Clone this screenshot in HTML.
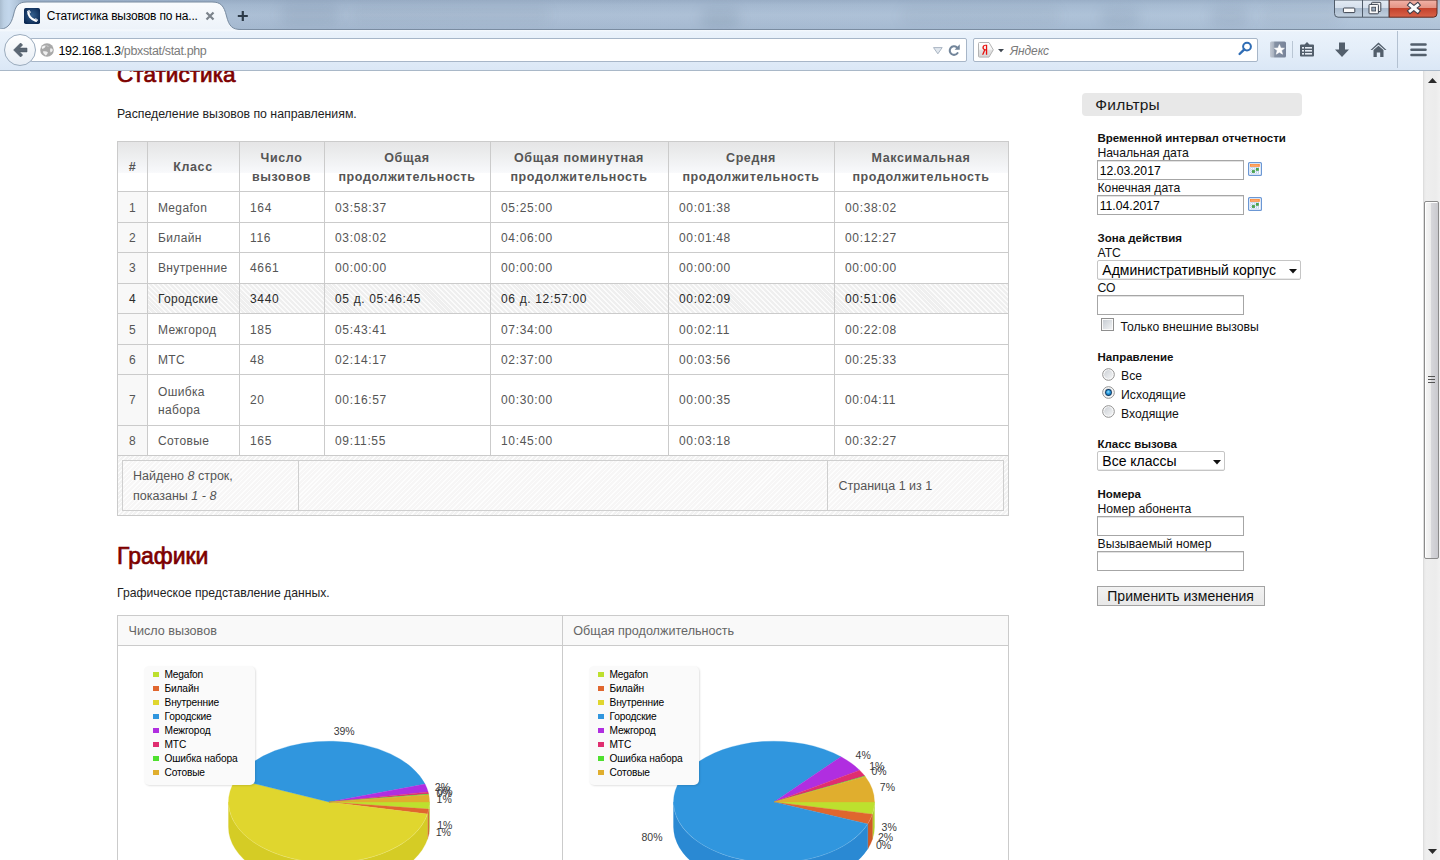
<!DOCTYPE html><html><head><meta charset="utf-8"><style>
html,body{margin:0;padding:0;width:1440px;height:860px;overflow:hidden;background:#fff;font-family:"Liberation Sans",sans-serif;}
.t{position:absolute;white-space:nowrap;}
.r{position:absolute;box-sizing:border-box;}
svg{position:absolute;overflow:visible}
</style></head><body>
<div class="r" style="left:1423px;top:71px;width:17px;height:789px;background:linear-gradient(90deg,#e6e6e6 0px,#eeeeee 2px,#ececec 12px,#f2f2f2 17px);border-left:1px solid #dedede;"></div>
<svg width="9" height="5" style="left:1428px;top:78px" viewBox="0 0 9 5"><path d="M0,5 L4.5,0 L9,5 Z" fill="#2a2a2a"/></svg>
<svg width="9" height="5" style="left:1428px;top:849px" viewBox="0 0 9 5"><path d="M0,0 L9,0 L4.5,5 Z" fill="#2a2a2a"/></svg>
<div class="r" style="left:1424px;top:201px;width:15px;height:358px;border:1px solid #8b8b8b;border-radius:2px;background:linear-gradient(90deg,#f7f7f7 0%,#ececec 45%,#d6d6da 50%,#c9c9ce 100%);box-shadow:inset 1px 1px 0 #fff;"></div>
<svg width="7" height="8" style="left:1428px;top:376px" viewBox="0 0 7 8"><path d="M0,0.5 L7,0.5 M0,3.5 L7,3.5 M0,6.5 L7,6.5" stroke="#555" stroke-width="1"/></svg>
<div class="t" style="left:117px;top:64px;font-size:22.6px;line-height:22.6px;color:#7d0000;-webkit-text-stroke:0.7px #7d0000;">Статистика</div>
<div class="t" style="left:117px;top:108px;font-size:12.3px;line-height:12.3px;color:#1e1e1e;">Распеделение вызовов по направлениям.</div>
<div class="r" style="left:118px;top:142px;width:890px;height:49px;background:linear-gradient(#e5e5e6 0%,#ecedee 25%,#f4f5f7 50%,#f8f9fb 62%,#ffffff 64%,#ffffff 100%);"></div>
<div class="r" style="left:118px;top:192px;width:29px;height:263px;background:#f8f8f8;"></div>
<div class="r" style="left:148px;top:284px;width:860px;height:29px;background:repeating-linear-gradient(45deg,#efefef 0px,#efefef 2.2px,#fbfbfb 2.2px,#fbfbfb 3.5px);"></div>
<div class="r" style="left:117px;top:141px;width:892px;height:1px;background:#cbcbcb;"></div>
<div class="r" style="left:117px;top:191px;width:892px;height:1px;background:#cbcbcb;"></div>
<div class="r" style="left:117px;top:222px;width:892px;height:1px;background:#cbcbcb;"></div>
<div class="r" style="left:117px;top:252px;width:892px;height:1px;background:#cbcbcb;"></div>
<div class="r" style="left:117px;top:283px;width:892px;height:1px;background:#cbcbcb;"></div>
<div class="r" style="left:117px;top:313px;width:892px;height:1px;background:#cbcbcb;"></div>
<div class="r" style="left:117px;top:344px;width:892px;height:1px;background:#cbcbcb;"></div>
<div class="r" style="left:117px;top:374px;width:892px;height:1px;background:#cbcbcb;"></div>
<div class="r" style="left:117px;top:425px;width:892px;height:1px;background:#cbcbcb;"></div>
<div class="r" style="left:117px;top:455px;width:892px;height:1px;background:#cbcbcb;"></div>
<div class="r" style="left:117px;top:141px;width:1px;height:314px;background:#cbcbcb;"></div>
<div class="r" style="left:147px;top:141px;width:1px;height:314px;background:#cbcbcb;"></div>
<div class="r" style="left:239px;top:141px;width:1px;height:314px;background:#cbcbcb;"></div>
<div class="r" style="left:324px;top:141px;width:1px;height:314px;background:#cbcbcb;"></div>
<div class="r" style="left:490px;top:141px;width:1px;height:314px;background:#cbcbcb;"></div>
<div class="r" style="left:668px;top:141px;width:1px;height:314px;background:#cbcbcb;"></div>
<div class="r" style="left:834px;top:141px;width:1px;height:314px;background:#cbcbcb;"></div>
<div class="r" style="left:1008px;top:141px;width:1px;height:314px;background:#cbcbcb;"></div>
<div class="t" style="left:32.5px;width:200px;text-align:center;top:161px;font-size:12.5px;line-height:12.5px;color:#555555;font-weight:bold;letter-spacing:0.6px;">#</div>
<div class="t" style="left:93.0px;width:200px;text-align:center;top:161px;font-size:12.5px;line-height:12.5px;color:#555555;font-weight:bold;letter-spacing:0.6px;">Класс</div>
<div class="t" style="left:181.5px;width:200px;text-align:center;top:152px;font-size:12.5px;line-height:12.5px;color:#555555;font-weight:bold;letter-spacing:0.6px;">Число</div>
<div class="t" style="left:181.5px;width:200px;text-align:center;top:171px;font-size:12.5px;line-height:12.5px;color:#555555;font-weight:bold;letter-spacing:0.6px;">вызовов</div>
<div class="t" style="left:307.0px;width:200px;text-align:center;top:152px;font-size:12.5px;line-height:12.5px;color:#555555;font-weight:bold;letter-spacing:0.6px;">Общая</div>
<div class="t" style="left:307.0px;width:200px;text-align:center;top:171px;font-size:12.5px;line-height:12.5px;color:#555555;font-weight:bold;letter-spacing:0.6px;">продолжительность</div>
<div class="t" style="left:479.0px;width:200px;text-align:center;top:152px;font-size:12.5px;line-height:12.5px;color:#555555;font-weight:bold;letter-spacing:0.6px;">Общая поминутная</div>
<div class="t" style="left:479.0px;width:200px;text-align:center;top:171px;font-size:12.5px;line-height:12.5px;color:#555555;font-weight:bold;letter-spacing:0.6px;">продолжительность</div>
<div class="t" style="left:651.0px;width:200px;text-align:center;top:152px;font-size:12.5px;line-height:12.5px;color:#555555;font-weight:bold;letter-spacing:0.6px;">Средня</div>
<div class="t" style="left:651.0px;width:200px;text-align:center;top:171px;font-size:12.5px;line-height:12.5px;color:#555555;font-weight:bold;letter-spacing:0.6px;">продолжительность</div>
<div class="t" style="left:821.0px;width:200px;text-align:center;top:152px;font-size:12.5px;line-height:12.5px;color:#555555;font-weight:bold;letter-spacing:0.6px;">Максимальная</div>
<div class="t" style="left:821.0px;width:200px;text-align:center;top:171px;font-size:12.5px;line-height:12.5px;color:#555555;font-weight:bold;letter-spacing:0.6px;">продолжительность</div>
<div class="t" style="left:122.5px;width:20px;text-align:center;top:202px;font-size:12px;line-height:12px;color:#555555;letter-spacing:0.3px;">1</div>
<div class="t" style="left:158px;top:202px;font-size:12px;line-height:12px;color:#555555;letter-spacing:0.35px;">Megafon</div>
<div class="t" style="left:250px;top:202px;font-size:12px;line-height:12px;color:#555555;letter-spacing:0.65px;">164</div>
<div class="t" style="left:335px;top:202px;font-size:12px;line-height:12px;color:#555555;letter-spacing:0.65px;">03:58:37</div>
<div class="t" style="left:501px;top:202px;font-size:12px;line-height:12px;color:#555555;letter-spacing:0.65px;">05:25:00</div>
<div class="t" style="left:679px;top:202px;font-size:12px;line-height:12px;color:#555555;letter-spacing:0.65px;">00:01:38</div>
<div class="t" style="left:845px;top:202px;font-size:12px;line-height:12px;color:#555555;letter-spacing:0.65px;">00:38:02</div>
<div class="t" style="left:122.5px;width:20px;text-align:center;top:232px;font-size:12px;line-height:12px;color:#555555;letter-spacing:0.3px;">2</div>
<div class="t" style="left:158px;top:232px;font-size:12px;line-height:12px;color:#555555;letter-spacing:0.35px;">Билайн</div>
<div class="t" style="left:250px;top:232px;font-size:12px;line-height:12px;color:#555555;letter-spacing:0.65px;">116</div>
<div class="t" style="left:335px;top:232px;font-size:12px;line-height:12px;color:#555555;letter-spacing:0.65px;">03:08:02</div>
<div class="t" style="left:501px;top:232px;font-size:12px;line-height:12px;color:#555555;letter-spacing:0.65px;">04:06:00</div>
<div class="t" style="left:679px;top:232px;font-size:12px;line-height:12px;color:#555555;letter-spacing:0.65px;">00:01:48</div>
<div class="t" style="left:845px;top:232px;font-size:12px;line-height:12px;color:#555555;letter-spacing:0.65px;">00:12:27</div>
<div class="t" style="left:122.5px;width:20px;text-align:center;top:262px;font-size:12px;line-height:12px;color:#555555;letter-spacing:0.3px;">3</div>
<div class="t" style="left:158px;top:262px;font-size:12px;line-height:12px;color:#555555;letter-spacing:0.35px;">Внутренние</div>
<div class="t" style="left:250px;top:262px;font-size:12px;line-height:12px;color:#555555;letter-spacing:0.65px;">4661</div>
<div class="t" style="left:335px;top:262px;font-size:12px;line-height:12px;color:#555555;letter-spacing:0.65px;">00:00:00</div>
<div class="t" style="left:501px;top:262px;font-size:12px;line-height:12px;color:#555555;letter-spacing:0.65px;">00:00:00</div>
<div class="t" style="left:679px;top:262px;font-size:12px;line-height:12px;color:#555555;letter-spacing:0.65px;">00:00:00</div>
<div class="t" style="left:845px;top:262px;font-size:12px;line-height:12px;color:#555555;letter-spacing:0.65px;">00:00:00</div>
<div class="t" style="left:122.5px;width:20px;text-align:center;top:293px;font-size:12px;line-height:12px;color:#2b2b2b;letter-spacing:0.3px;">4</div>
<div class="t" style="left:158px;top:293px;font-size:12px;line-height:12px;color:#2b2b2b;letter-spacing:0.35px;">Городские</div>
<div class="t" style="left:250px;top:293px;font-size:12px;line-height:12px;color:#2b2b2b;letter-spacing:0.65px;">3440</div>
<div class="t" style="left:335px;top:293px;font-size:12px;line-height:12px;color:#2b2b2b;letter-spacing:0.65px;">05 д. 05:46:45</div>
<div class="t" style="left:501px;top:293px;font-size:12px;line-height:12px;color:#2b2b2b;letter-spacing:0.65px;">06 д. 12:57:00</div>
<div class="t" style="left:679px;top:293px;font-size:12px;line-height:12px;color:#2b2b2b;letter-spacing:0.65px;">00:02:09</div>
<div class="t" style="left:845px;top:293px;font-size:12px;line-height:12px;color:#2b2b2b;letter-spacing:0.65px;">00:51:06</div>
<div class="t" style="left:122.5px;width:20px;text-align:center;top:324px;font-size:12px;line-height:12px;color:#555555;letter-spacing:0.3px;">5</div>
<div class="t" style="left:158px;top:324px;font-size:12px;line-height:12px;color:#555555;letter-spacing:0.35px;">Межгород</div>
<div class="t" style="left:250px;top:324px;font-size:12px;line-height:12px;color:#555555;letter-spacing:0.65px;">185</div>
<div class="t" style="left:335px;top:324px;font-size:12px;line-height:12px;color:#555555;letter-spacing:0.65px;">05:43:41</div>
<div class="t" style="left:501px;top:324px;font-size:12px;line-height:12px;color:#555555;letter-spacing:0.65px;">07:34:00</div>
<div class="t" style="left:679px;top:324px;font-size:12px;line-height:12px;color:#555555;letter-spacing:0.65px;">00:02:11</div>
<div class="t" style="left:845px;top:324px;font-size:12px;line-height:12px;color:#555555;letter-spacing:0.65px;">00:22:08</div>
<div class="t" style="left:122.5px;width:20px;text-align:center;top:354px;font-size:12px;line-height:12px;color:#555555;letter-spacing:0.3px;">6</div>
<div class="t" style="left:158px;top:354px;font-size:12px;line-height:12px;color:#555555;letter-spacing:0.35px;">МТС</div>
<div class="t" style="left:250px;top:354px;font-size:12px;line-height:12px;color:#555555;letter-spacing:0.65px;">48</div>
<div class="t" style="left:335px;top:354px;font-size:12px;line-height:12px;color:#555555;letter-spacing:0.65px;">02:14:17</div>
<div class="t" style="left:501px;top:354px;font-size:12px;line-height:12px;color:#555555;letter-spacing:0.65px;">02:37:00</div>
<div class="t" style="left:679px;top:354px;font-size:12px;line-height:12px;color:#555555;letter-spacing:0.65px;">00:03:56</div>
<div class="t" style="left:845px;top:354px;font-size:12px;line-height:12px;color:#555555;letter-spacing:0.65px;">00:25:33</div>
<div class="t" style="left:122.5px;width:20px;text-align:center;top:394px;font-size:12px;line-height:12px;color:#555555;letter-spacing:0.3px;">7</div>
<div class="t" style="left:158px;top:385.5px;font-size:12px;line-height:12px;color:#555555;letter-spacing:0.35px;">Ошибка</div>
<div class="t" style="left:158px;top:404px;font-size:12px;line-height:12px;color:#555555;letter-spacing:0.35px;">набора</div>
<div class="t" style="left:250px;top:394px;font-size:12px;line-height:12px;color:#555555;letter-spacing:0.65px;">20</div>
<div class="t" style="left:335px;top:394px;font-size:12px;line-height:12px;color:#555555;letter-spacing:0.65px;">00:16:57</div>
<div class="t" style="left:501px;top:394px;font-size:12px;line-height:12px;color:#555555;letter-spacing:0.65px;">00:30:00</div>
<div class="t" style="left:679px;top:394px;font-size:12px;line-height:12px;color:#555555;letter-spacing:0.65px;">00:00:35</div>
<div class="t" style="left:845px;top:394px;font-size:12px;line-height:12px;color:#555555;letter-spacing:0.65px;">00:04:11</div>
<div class="t" style="left:122.5px;width:20px;text-align:center;top:435px;font-size:12px;line-height:12px;color:#555555;letter-spacing:0.3px;">8</div>
<div class="t" style="left:158px;top:435px;font-size:12px;line-height:12px;color:#555555;letter-spacing:0.35px;">Сотовые</div>
<div class="t" style="left:250px;top:435px;font-size:12px;line-height:12px;color:#555555;letter-spacing:0.65px;">165</div>
<div class="t" style="left:335px;top:435px;font-size:12px;line-height:12px;color:#555555;letter-spacing:0.65px;">09:11:55</div>
<div class="t" style="left:501px;top:435px;font-size:12px;line-height:12px;color:#555555;letter-spacing:0.65px;">10:45:00</div>
<div class="t" style="left:679px;top:435px;font-size:12px;line-height:12px;color:#555555;letter-spacing:0.65px;">00:03:18</div>
<div class="t" style="left:845px;top:435px;font-size:12px;line-height:12px;color:#555555;letter-spacing:0.65px;">00:32:27</div>
<div class="r" style="left:118px;top:456px;width:890px;height:59px;background:repeating-linear-gradient(-45deg,#f2f2f2 0px,#f2f2f2 2.1px,#fcfcfc 2.1px,#fcfcfc 3.2px);"></div>
<div class="r" style="left:117px;top:515px;width:892px;height:1px;background:#cbcbcb;"></div>
<div class="r" style="left:117px;top:456px;width:1px;height:60px;background:#cbcbcb;"></div>
<div class="r" style="left:1008px;top:456px;width:1px;height:60px;background:#cbcbcb;"></div>
<div class="r" style="left:122px;top:460px;width:882px;height:51px;border:1px solid #cfcfcf;background:repeating-linear-gradient(-45deg,#f7f6f6 0px,#f7f6f6 2.1px,#fdfdfd 2.1px,#fdfdfd 3.2px);"></div>
<div class="r" style="left:298px;top:461px;width:1px;height:49px;background:#cfcfcf;"></div>
<div class="r" style="left:827px;top:461px;width:1px;height:49px;background:#cfcfcf;"></div>
<div class="t" style="left:133px;top:470px;font-size:12.5px;line-height:12.5px;color:#555555;">Найдено <i>8</i> строк,</div>
<div class="t" style="left:133px;top:490px;font-size:12.5px;line-height:12.5px;color:#555555;">показаны <i>1 - 8</i></div>
<div class="t" style="left:838.5px;top:480px;font-size:12.5px;line-height:12.5px;color:#555555;">Страница 1 из 1</div>
<div class="t" style="left:117px;top:545px;font-size:23px;line-height:23px;color:#7d0000;-webkit-text-stroke:0.7px #7d0000;">Графики</div>
<div class="t" style="left:117px;top:587px;font-size:12.2px;line-height:12.2px;color:#1e1e1e;">Графическое представление данных.</div>
<div class="r" style="left:117px;top:615px;width:892px;height:260px;border:1px solid #cbcbcb;"></div>
<div class="r" style="left:118px;top:616px;width:890px;height:29px;background:#f9f9f9;"></div>
<div class="r" style="left:118px;top:645px;width:890px;height:1px;background:#cbcbcb;"></div>
<div class="r" style="left:562px;top:616px;width:1px;height:260px;background:#cbcbcb;"></div>
<div class="t" style="left:128.5px;top:625px;font-size:12.6px;line-height:12.6px;color:#666666;">Число вызовов</div>
<div class="t" style="left:573.3px;top:625px;font-size:12.6px;line-height:12.6px;color:#666666;">Общая продолжительность</div>
<svg width="240" height="200" style="left:208.60000000000002px;top:721.6px">
<path d="M220.50,80.00 A100.5,60.8 0 0 1 219.81,87.10 L219.81,112.10 A100.5,60.8 0 0 0 220.50,105.00 Z" fill="#afd12a" stroke="#afd12a" stroke-width="0.3"/>
<path d="M219.81,87.10 A100.5,60.8 0 0 1 218.50,92.08 L218.50,117.08 A100.5,60.8 0 0 0 219.81,112.10 Z" fill="#cf5a27" stroke="#cf5a27" stroke-width="0.3"/>
<path d="M218.50,92.08 A100.5,60.8 0 0 1 19.50,80.00 L19.50,105.00 A100.5,60.8 0 0 0 218.50,117.08 Z" fill="#d5cc25" stroke="#d5cc25" stroke-width="0.3"/>
<path d="M120.00,80.00 L220.50,80.00 A100.5,60.8 0 0 1 219.81,87.10 Z" fill="#bde02e" stroke="#bde02e" stroke-width="0.3"/>
<path d="M120.00,80.00 L219.81,87.10 A100.5,60.8 0 0 1 218.50,92.08 Z" fill="#e0662e" stroke="#e0662e" stroke-width="0.3"/>
<path d="M120.00,80.00 L218.50,92.08 A100.5,60.8 0 1 1 26.92,57.07 Z" fill="#e0d62e" stroke="#e0d62e" stroke-width="0.3"/>
<path d="M120.00,80.00 L26.92,57.07 A100.5,60.8 0 0 1 216.06,62.12 Z" fill="#3096de" stroke="#3096de" stroke-width="0.3"/>
<path d="M120.00,80.00 L216.06,62.12 A100.5,60.8 0 0 1 219.11,69.93 Z" fill="#b02ee0" stroke="#b02ee0" stroke-width="0.3"/>
<path d="M120.00,80.00 L219.11,69.93 A100.5,60.8 0 0 1 219.62,71.99 Z" fill="#e02e70" stroke="#e02e70" stroke-width="0.3"/>
<path d="M120.00,80.00 L219.62,71.99 A100.5,60.8 0 0 1 219.80,72.85 Z" fill="#4ee02e" stroke="#4ee02e" stroke-width="0.3"/>
<path d="M120.00,80.00 L219.80,72.85 A100.5,60.8 0 0 1 220.50,80.00 Z" fill="#e0ae2e" stroke="#e0ae2e" stroke-width="0.3"/>
<path d="M220.36,83.18 A100.5,60.8 0 0 1 19.64,83.18" fill="none" stroke="#ffffff" stroke-opacity="0.15" stroke-width="1"/>
</svg>
<svg width="240" height="200" style="left:653.6px;top:721.6px">
<path d="M220.50,80.00 A100.5,60.8 0 0 1 218.45,92.23 L218.45,117.23 A100.5,60.8 0 0 0 220.50,105.00 Z" fill="#afd12a" stroke="#afd12a" stroke-width="0.3"/>
<path d="M218.45,92.23 A100.5,60.8 0 0 1 213.76,101.89 L213.76,126.89 A100.5,60.8 0 0 0 218.45,117.23 Z" fill="#cf5a27" stroke="#cf5a27" stroke-width="0.3"/>
<path d="M213.76,101.89 A100.5,60.8 0 0 1 19.50,80.00 L19.50,105.00 A100.5,60.8 0 0 0 213.76,126.89 Z" fill="#2a89d3" stroke="#2a89d3" stroke-width="0.3"/>
<path d="M120.00,80.00 L220.50,80.00 A100.5,60.8 0 0 1 218.45,92.23 Z" fill="#bde02e" stroke="#bde02e" stroke-width="0.3"/>
<path d="M120.00,80.00 L218.45,92.23 A100.5,60.8 0 0 1 213.76,101.89 Z" fill="#e0662e" stroke="#e0662e" stroke-width="0.3"/>
<path d="M120.00,80.00 L213.76,101.89 A100.5,60.8 0 1 1 186.99,34.68 Z" fill="#3096de" stroke="#3096de" stroke-width="0.3"/>
<path d="M120.00,80.00 L186.99,34.68 A100.5,60.8 0 0 1 205.60,48.14 Z" fill="#b02ee0" stroke="#b02ee0" stroke-width="0.3"/>
<path d="M120.00,80.00 L205.60,48.14 A100.5,60.8 0 0 1 210.86,54.02 Z" fill="#e02e70" stroke="#e02e70" stroke-width="0.3"/>
<path d="M120.00,80.00 L210.86,54.02 A100.5,60.8 0 0 1 211.23,54.50 Z" fill="#4ee02e" stroke="#4ee02e" stroke-width="0.3"/>
<path d="M120.00,80.00 L211.23,54.50 A100.5,60.8 0 0 1 220.50,80.00 Z" fill="#e0ae2e" stroke="#e0ae2e" stroke-width="0.3"/>
<path d="M220.36,83.18 A100.5,60.8 0 0 1 19.64,83.18" fill="none" stroke="#ffffff" stroke-opacity="0.15" stroke-width="1"/>
</svg>
<div class="t" style="left:333.7px;top:725.5px;font-size:10.5px;line-height:10.5px;color:#3a3a3a;">39%</div>
<div class="t" style="left:434.8px;top:781.5px;font-size:10.5px;line-height:10.5px;color:#3a3a3a;">2%</div>
<div class="t" style="left:436.6px;top:788px;font-size:10.5px;line-height:10.5px;color:#3a3a3a;">0%</div>
<div class="t" style="left:437.5px;top:786px;font-size:10.5px;line-height:10.5px;color:#3a3a3a;">0%</div>
<div class="t" style="left:436.6px;top:794px;font-size:10.5px;line-height:10.5px;color:#3a3a3a;">1%</div>
<div class="t" style="left:437.2px;top:820px;font-size:10.5px;line-height:10.5px;color:#3a3a3a;">1%</div>
<div class="t" style="left:435.7px;top:826.5px;font-size:10.5px;line-height:10.5px;color:#3a3a3a;">1%</div>
<div class="t" style="left:855.6px;top:749.7px;font-size:10.5px;line-height:10.5px;color:#3a3a3a;">4%</div>
<div class="t" style="left:869.2px;top:761px;font-size:10.5px;line-height:10.5px;color:#3a3a3a;">1%</div>
<div class="t" style="left:871.5px;top:765.6px;font-size:10.5px;line-height:10.5px;color:#3a3a3a;">0%</div>
<div class="t" style="left:879.8px;top:781.5px;font-size:10.5px;line-height:10.5px;color:#3a3a3a;">7%</div>
<div class="t" style="left:881.6px;top:821.5px;font-size:10.5px;line-height:10.5px;color:#3a3a3a;">3%</div>
<div class="t" style="left:878px;top:832px;font-size:10.5px;line-height:10.5px;color:#3a3a3a;">2%</div>
<div class="t" style="left:876px;top:839.7px;font-size:10.5px;line-height:10.5px;color:#3a3a3a;">0%</div>
<div class="t" style="left:641.5px;top:832px;font-size:10.5px;line-height:10.5px;color:#3a3a3a;">80%</div>
<div class="r" style="left:144px;top:666px;width:111px;height:119px;background:#fafafa;border-radius:5px;box-shadow:1px 1px 2px rgba(0,0,0,0.12);"></div>
<div class="r" style="left:153px;top:671.75px;width:5.5px;height:5.5px;background:#bde02e;"></div>
<div class="t" style="left:164.5px;top:670px;font-size:10.2px;line-height:10.2px;color:#000;letter-spacing:-0.15px;">Megafon</div>
<div class="r" style="left:153px;top:685.75px;width:5.5px;height:5.5px;background:#e0662e;"></div>
<div class="t" style="left:164.5px;top:684px;font-size:10.2px;line-height:10.2px;color:#000;letter-spacing:-0.15px;">Билайн</div>
<div class="r" style="left:153px;top:699.75px;width:5.5px;height:5.5px;background:#e0d62e;"></div>
<div class="t" style="left:164.5px;top:698px;font-size:10.2px;line-height:10.2px;color:#000;letter-spacing:-0.15px;">Внутренние</div>
<div class="r" style="left:153px;top:713.75px;width:5.5px;height:5.5px;background:#3096de;"></div>
<div class="t" style="left:164.5px;top:712px;font-size:10.2px;line-height:10.2px;color:#000;letter-spacing:-0.15px;">Городские</div>
<div class="r" style="left:153px;top:727.75px;width:5.5px;height:5.5px;background:#b02ee0;"></div>
<div class="t" style="left:164.5px;top:726px;font-size:10.2px;line-height:10.2px;color:#000;letter-spacing:-0.15px;">Межгород</div>
<div class="r" style="left:153px;top:741.75px;width:5.5px;height:5.5px;background:#e02e70;"></div>
<div class="t" style="left:164.5px;top:740px;font-size:10.2px;line-height:10.2px;color:#000;letter-spacing:-0.15px;">МТС</div>
<div class="r" style="left:153px;top:755.75px;width:5.5px;height:5.5px;background:#4ee02e;"></div>
<div class="t" style="left:164.5px;top:754px;font-size:10.2px;line-height:10.2px;color:#000;letter-spacing:-0.15px;">Ошибка набора</div>
<div class="r" style="left:153px;top:769.75px;width:5.5px;height:5.5px;background:#e0ae2e;"></div>
<div class="t" style="left:164.5px;top:768px;font-size:10.2px;line-height:10.2px;color:#000;letter-spacing:-0.15px;">Сотовые</div>
<div class="r" style="left:589px;top:666px;width:110px;height:119px;background:#fafafa;border-radius:5px;box-shadow:1px 1px 2px rgba(0,0,0,0.12);"></div>
<div class="r" style="left:598px;top:671.75px;width:5.5px;height:5.5px;background:#bde02e;"></div>
<div class="t" style="left:609.5px;top:670px;font-size:10.2px;line-height:10.2px;color:#000;letter-spacing:-0.15px;">Megafon</div>
<div class="r" style="left:598px;top:685.75px;width:5.5px;height:5.5px;background:#e0662e;"></div>
<div class="t" style="left:609.5px;top:684px;font-size:10.2px;line-height:10.2px;color:#000;letter-spacing:-0.15px;">Билайн</div>
<div class="r" style="left:598px;top:699.75px;width:5.5px;height:5.5px;background:#e0d62e;"></div>
<div class="t" style="left:609.5px;top:698px;font-size:10.2px;line-height:10.2px;color:#000;letter-spacing:-0.15px;">Внутренние</div>
<div class="r" style="left:598px;top:713.75px;width:5.5px;height:5.5px;background:#3096de;"></div>
<div class="t" style="left:609.5px;top:712px;font-size:10.2px;line-height:10.2px;color:#000;letter-spacing:-0.15px;">Городские</div>
<div class="r" style="left:598px;top:727.75px;width:5.5px;height:5.5px;background:#b02ee0;"></div>
<div class="t" style="left:609.5px;top:726px;font-size:10.2px;line-height:10.2px;color:#000;letter-spacing:-0.15px;">Межгород</div>
<div class="r" style="left:598px;top:741.75px;width:5.5px;height:5.5px;background:#e02e70;"></div>
<div class="t" style="left:609.5px;top:740px;font-size:10.2px;line-height:10.2px;color:#000;letter-spacing:-0.15px;">МТС</div>
<div class="r" style="left:598px;top:755.75px;width:5.5px;height:5.5px;background:#4ee02e;"></div>
<div class="t" style="left:609.5px;top:754px;font-size:10.2px;line-height:10.2px;color:#000;letter-spacing:-0.15px;">Ошибка набора</div>
<div class="r" style="left:598px;top:769.75px;width:5.5px;height:5.5px;background:#e0ae2e;"></div>
<div class="t" style="left:609.5px;top:768px;font-size:10.2px;line-height:10.2px;color:#000;letter-spacing:-0.15px;">Сотовые</div>
<div class="r" style="left:1082px;top:93px;width:220px;height:23px;background:#e8e8e8;border-radius:4px;"></div>
<div class="t" style="left:1095.3px;top:97px;font-size:15.5px;line-height:15.5px;color:#1a1a1a;letter-spacing:0.2px;">Фильтры</div>
<div class="t" style="left:1097.5px;top:133px;font-size:11.5px;line-height:11.5px;color:#111111;font-weight:bold;">Временной интервал отчетности</div>
<div class="t" style="left:1097.5px;top:147px;font-size:12.2px;line-height:12.2px;color:#111111;">Начальная дата</div>
<div class="r" style="left:1097px;top:160px;width:147px;height:20px;background:#fff;border:1px solid #a6a6a6;box-shadow:inset 0 1px 0 #e2e2e2;"></div>
<div class="t" style="left:1099.7px;top:165px;font-size:12.2px;line-height:12.2px;color:#000;">12.03.2017</div>
<div class="t" style="left:1097.5px;top:182px;font-size:12.2px;line-height:12.2px;color:#111111;">Конечная дата</div>
<div class="r" style="left:1097px;top:195px;width:147px;height:20px;background:#fff;border:1px solid #a6a6a6;box-shadow:inset 0 1px 0 #e2e2e2;"></div>
<div class="t" style="left:1099.7px;top:200px;font-size:12.2px;line-height:12.2px;color:#000;">11.04.2017</div>
<svg width="14" height="14" style="left:1248px;top:162px" viewBox="0 0 14 14">
<rect x="0.6" y="0.6" width="12.8" height="12.8" rx="1" fill="#fbfdff" stroke="#6b97d4" stroke-width="1.2"/>
<rect x="2" y="2" width="9.8" height="2.8" fill="#fb8a3c"/>
<rect x="2.8" y="2.7" width="7.8" height="1" fill="#fdb27a"/>
<path d="M2,6.1 L12,6.1 M2,8.2 L12,8.2 M2,10.3 L12,10.3 M3.8,5 L3.8,12 M5.9,5 L5.9,12 M8,5 L8,12 M10.1,5 L10.1,12" stroke="#a3bfe6" stroke-width="0.9" stroke-dasharray="1,1"/>
<rect x="7.9" y="6" width="2.9" height="2.8" fill="#4aa24e"/><rect x="3.9" y="8.1" width="3" height="2.8" fill="#4aa24e"/>
</svg>
<svg width="14" height="14" style="left:1248px;top:197px" viewBox="0 0 14 14">
<rect x="0.6" y="0.6" width="12.8" height="12.8" rx="1" fill="#fbfdff" stroke="#6b97d4" stroke-width="1.2"/>
<rect x="2" y="2" width="9.8" height="2.8" fill="#fb8a3c"/>
<rect x="2.8" y="2.7" width="7.8" height="1" fill="#fdb27a"/>
<path d="M2,6.1 L12,6.1 M2,8.2 L12,8.2 M2,10.3 L12,10.3 M3.8,5 L3.8,12 M5.9,5 L5.9,12 M8,5 L8,12 M10.1,5 L10.1,12" stroke="#a3bfe6" stroke-width="0.9" stroke-dasharray="1,1"/>
<rect x="7.9" y="6" width="2.9" height="2.8" fill="#4aa24e"/><rect x="3.9" y="8.1" width="3" height="2.8" fill="#4aa24e"/>
</svg>
<div class="t" style="left:1097.5px;top:233px;font-size:11.5px;line-height:11.5px;color:#111111;font-weight:bold;">Зона действия</div>
<div class="t" style="left:1097.5px;top:246.5px;font-size:12.2px;line-height:12.2px;color:#111111;">АТС</div>
<div class="r" style="left:1097px;top:260px;width:204px;height:20px;background:#fff;border:1px solid #c5c5c5;border-radius:2px;box-shadow:inset 0 -1px 0 #eaeaea;"></div>
<div class="t" style="left:1102.3px;top:263px;font-size:14px;line-height:14px;color:#000;">Административный корпус</div>
<svg width="8" height="5" style="left:1288.5px;top:268.5px" viewBox="0 0 8 5"><path d="M0,0 L8,0 L4,4.5 Z" fill="#111"/></svg>
<div class="t" style="left:1097.5px;top:282px;font-size:12.2px;line-height:12.2px;color:#111111;">СО</div>
<div class="r" style="left:1097px;top:295px;width:147px;height:20px;background:#fff;border:1px solid #a6a6a6;box-shadow:inset 0 1px 0 #e2e2e2;"></div>
<div class="r" style="left:1101px;top:318px;width:13px;height:13px;border:1px solid #8f8f8f;background:linear-gradient(135deg,#c3c9d0,#f5f6f7);box-shadow:inset 0 0 0 1px #fafafa;"></div>
<div class="t" style="left:1120.5px;top:320.5px;font-size:12.2px;line-height:12.2px;color:#111111;">Только внешние вызовы</div>
<div class="t" style="left:1097.5px;top:352px;font-size:11.5px;line-height:11.5px;color:#111111;font-weight:bold;">Направление</div>
<svg width="13" height="13" style="left:1101.9px;top:367.5px" viewBox="0 0 13 13">
<defs><linearGradient id="rdg" x1="0" y1="0" x2="1" y2="1"><stop offset="0" stop-color="#cdd1d6"/><stop offset="1" stop-color="#f4f5f6"/></linearGradient>
<radialGradient id="rdo" cx="0.45" cy="0.35" r="0.7"><stop offset="0" stop-color="#9be0ff"/><stop offset="0.5" stop-color="#2a9ee0"/><stop offset="1" stop-color="#1369a8"/></radialGradient></defs>
<circle cx="6.5" cy="6.5" r="5.8" fill="#fff" stroke="#8d8d8d" stroke-width="1"/>
<circle cx="6.5" cy="6.5" r="4.4" fill="url(#rdg)"/></svg>
<svg width="13" height="13" style="left:1101.9px;top:386.4px" viewBox="0 0 13 13">
<defs><linearGradient id="rdg" x1="0" y1="0" x2="1" y2="1"><stop offset="0" stop-color="#cdd1d6"/><stop offset="1" stop-color="#f4f5f6"/></linearGradient>
<radialGradient id="rdo" cx="0.45" cy="0.35" r="0.7"><stop offset="0" stop-color="#9be0ff"/><stop offset="0.5" stop-color="#2a9ee0"/><stop offset="1" stop-color="#1369a8"/></radialGradient></defs>
<circle cx="6.5" cy="6.5" r="5.8" fill="#fff" stroke="#8d8d8d" stroke-width="1"/>
<circle cx="6.5" cy="6.5" r="4.4" fill="url(#rdg)"/><circle cx="6.5" cy="6.5" r="3.4" fill="#0f3a63"/><circle cx="6.5" cy="6.6" r="2.5" fill="url(#rdo)"/></svg>
<svg width="13" height="13" style="left:1101.9px;top:405.4px" viewBox="0 0 13 13">
<defs><linearGradient id="rdg" x1="0" y1="0" x2="1" y2="1"><stop offset="0" stop-color="#cdd1d6"/><stop offset="1" stop-color="#f4f5f6"/></linearGradient>
<radialGradient id="rdo" cx="0.45" cy="0.35" r="0.7"><stop offset="0" stop-color="#9be0ff"/><stop offset="0.5" stop-color="#2a9ee0"/><stop offset="1" stop-color="#1369a8"/></radialGradient></defs>
<circle cx="6.5" cy="6.5" r="5.8" fill="#fff" stroke="#8d8d8d" stroke-width="1"/>
<circle cx="6.5" cy="6.5" r="4.4" fill="url(#rdg)"/></svg>
<div class="t" style="left:1121.1px;top:370px;font-size:12.2px;line-height:12.2px;color:#111111;">Все</div>
<div class="t" style="left:1121.1px;top:388.6px;font-size:12.2px;line-height:12.2px;color:#111111;">Исходящие</div>
<div class="t" style="left:1121.1px;top:408px;font-size:12.2px;line-height:12.2px;color:#111111;">Входящие</div>
<div class="t" style="left:1097.5px;top:438.5px;font-size:11.5px;line-height:11.5px;color:#111111;font-weight:bold;">Класс вызова</div>
<div class="r" style="left:1097px;top:451px;width:128px;height:20px;background:#fff;border:1px solid #c5c5c5;border-radius:2px;box-shadow:inset 0 -1px 0 #eaeaea;"></div>
<div class="t" style="left:1102.3px;top:454px;font-size:14px;line-height:14px;color:#000;">Все классы</div>
<svg width="8" height="5" style="left:1213px;top:459.5px" viewBox="0 0 8 5"><path d="M0,0 L8,0 L4,4.5 Z" fill="#111"/></svg>
<div class="t" style="left:1097.5px;top:488.6px;font-size:11.5px;line-height:11.5px;color:#111111;font-weight:bold;">Номера</div>
<div class="t" style="left:1097.5px;top:502.5px;font-size:12.2px;line-height:12.2px;color:#111111;">Номер абонента</div>
<div class="r" style="left:1097px;top:516px;width:147px;height:20px;background:#fff;border:1px solid #a6a6a6;box-shadow:inset 0 1px 0 #e2e2e2;"></div>
<div class="t" style="left:1097.5px;top:537.5px;font-size:12.2px;line-height:12.2px;color:#111111;">Вызываемый номер</div>
<div class="r" style="left:1097px;top:551px;width:147px;height:20px;background:#fff;border:1px solid #a6a6a6;box-shadow:inset 0 1px 0 #e2e2e2;"></div>
<div class="r" style="left:1097px;top:586px;width:168px;height:20px;background:linear-gradient(#f2f2f2,#e8e8e8);border:1px solid #a3a3a3;"></div>
<div class="t" style="left:1107.3px;top:589px;font-size:14px;line-height:14px;color:#111;">Применить изменения</div>
<div class="r" style="left:0px;top:0px;width:1440px;height:30px;background:linear-gradient(90deg,#b9cde2 0px,#a9bfd6 30px,#a7bbd2 300px,#a9bdd4 700px,#aabfd6 1100px,#b3c6db 1440px);"></div>
<div class="r" style="left:280px;top:4px;width:60px;height:22px;background:rgba(60,80,110,0.1);border-radius:12px;filter:blur(6px);"></div>
<div class="r" style="left:350px;top:6px;width:200px;height:18px;background:rgba(60,80,110,0.06);border-radius:12px;filter:blur(6px);"></div>
<div class="r" style="left:700px;top:8px;width:40px;height:22px;background:rgba(60,80,110,0.12);border-radius:12px;filter:blur(6px);"></div>
<div class="r" style="left:900px;top:6px;width:160px;height:20px;background:rgba(60,80,110,0.06);border-radius:12px;filter:blur(6px);"></div>
<div class="r" style="left:1100px;top:8px;width:40px;height:20px;background:rgba(60,80,110,0.1);border-radius:12px;filter:blur(6px);"></div>
<div class="r" style="left:1210px;top:6px;width:40px;height:22px;background:rgba(60,80,110,0.1);border-radius:12px;filter:blur(6px);"></div>
<div class="r" style="left:1260px;top:6px;width:80px;height:20px;background:rgba(60,80,110,0.06);border-radius:12px;filter:blur(6px);"></div>
<div class="r" style="left:0px;top:0px;width:1440px;height:30px;background:linear-gradient(rgba(80,100,130,0.18) 0px,rgba(80,100,130,0.05) 5px,rgba(255,255,255,0.05) 15px,rgba(80,100,130,0.04) 29px);"></div>
<div class="r" style="left:0px;top:0px;width:22px;height:30px;background:linear-gradient(90deg,#a9bccf 0px,#bcd0e4 4px,#c3d7ec 9px,#b4c8dd 16px,rgba(170,190,212,0) 22px);"></div>
<div class="r" style="left:0px;top:29px;width:1440px;height:1px;background:#7a8ca1;"></div>
<svg width="260" height="32" style="left:0;top:0">
<defs><linearGradient id="tabg" x1="0" y1="0" x2="0" y2="1"><stop offset="0" stop-color="#f9fbfd"/><stop offset="1" stop-color="#ecf2f9"/></linearGradient></defs>
<path d="M-3,29.5 C7,29.5 11,25 13.5,15 C15.5,6 18,2 27,2 L212,2 C221,2 224,6 226.5,16 C229,26 232,29.5 241,29.5 L241,31 L-3,31 Z" fill="url(#tabg)" stroke="#788ba0" stroke-width="1"/>
<rect x="0" y="29" width="233" height="3" fill="#f1f6fb"/>
</svg>
<svg width="16" height="16" style="left:24px;top:8px" viewBox="0 0 16 16">
<defs><radialGradient id="fav" cx="0.5" cy="0.45" r="0.7"><stop offset="0" stop-color="#34608f"/><stop offset="1" stop-color="#04204a"/></radialGradient></defs>
<rect x="0" y="0" width="16" height="16" rx="1.8" fill="url(#fav)"/>
<path d="M4.4,3.6 C3.6,7 7,11.4 11.6,12.6" stroke="#fff" stroke-width="2.2" fill="none" stroke-linecap="round"/>
<path d="M3.2,3.4 L5.2,1.9 L7.0,4.3 L5.0,5.8 Z" fill="#fff"/>
<path d="M10.0,11.9 L11.6,9.9 L14.1,11.9 L12.5,13.9 Z" fill="#fff"/>
<path d="M4.3,2.5 L6.0,4.9 M11.0,10.6 L13.1,12.3" stroke="#1d3f6a" stroke-width="0.5"/>
</svg>
<div class="t" style="left:46.8px;top:9.7px;font-size:12px;line-height:12px;color:#000;letter-spacing:-0.18px;">Статистика вызовов по на...</div>
<svg width="10" height="10" style="left:205px;top:11px" viewBox="0 0 10 10"><path d="M1.5,1.5 L8.5,8.5 M8.5,1.5 L1.5,8.5" stroke="#7c838b" stroke-width="2.2" stroke-linecap="butt"/></svg>
<svg width="12" height="12" style="left:237px;top:10px" viewBox="0 0 12 12"><path d="M5.8,1 L5.8,11 M0.8,6 L10.8,6" stroke="#2c3a48" stroke-width="2.2"/></svg>
<svg width="106" height="20" style="left:1333px;top:0" viewBox="0 0 106 20">
<defs>
<linearGradient id="wcg" x1="0" y1="0" x2="0" y2="1"><stop offset="0" stop-color="#e3ebf4"/><stop offset="0.45" stop-color="#d5e0ec"/><stop offset="0.47" stop-color="#a9bacd"/><stop offset="1" stop-color="#c3d1e0"/></linearGradient>
<linearGradient id="wcr" x1="0" y1="0" x2="0" y2="1"><stop offset="0" stop-color="#f2b3a8"/><stop offset="0.45" stop-color="#e49384"/><stop offset="0.47" stop-color="#c3412b"/><stop offset="1" stop-color="#d9624a"/></linearGradient>
</defs>
<path d="M1.5,0 L1.5,13.5 Q1.5,17.2 5,17.2 L29.5,17.2 L29.5,0 Z" fill="url(#wcg)" stroke="#4f5b69" stroke-width="1"/>
<path d="M29.5,0 L29.5,17.2 L56.2,17.2 L56.2,0 Z" fill="url(#wcg)" stroke="#4f5b69" stroke-width="1"/>
<path d="M56.2,0 L56.2,17.2 L100.5,17.2 Q104,17.2 104,13.5 L104,0 Z" fill="url(#wcr)" stroke="#5e2a22" stroke-width="1"/>
<rect x="10.4" y="8" width="11.4" height="4.6" rx="0.8" fill="#fbfbfb" stroke="#3c4450" stroke-width="1"/>
<rect x="38.6" y="2.3" width="9.2" height="9.2" rx="0.8" fill="#f4f4f4" stroke="#3c4450" stroke-width="1"/>
<rect x="36" y="4.4" width="9.4" height="9.4" rx="0.8" fill="#fbfbfb" stroke="#3c4450" stroke-width="1"/>
<rect x="38.8" y="7.2" width="3.8" height="3.8" fill="#9aaabb" stroke="#3c4450" stroke-width="0.8"/>
<path d="M77.2,5 L84.6,11 M84.6,5 L77.2,11" stroke="#3d3d4a" stroke-width="5" stroke-linecap="square"/>
<path d="M77.2,5 L84.6,11 M84.6,5 L77.2,11" stroke="#fbfbfb" stroke-width="3" stroke-linecap="square"/>
</svg>
<div class="r" style="left:0px;top:30px;width:1440px;height:41px;background:linear-gradient(#f6f9fd 0px,#eaf2fb 2px,#e4eef9 50%,#dae7f6 100%);"></div>
<div class="r" style="left:0px;top:70px;width:1440px;height:1px;background:#a9b8c8;"></div>
<div class="r" style="left:30px;top:38px;width:937px;height:24px;background:#fff;border:1px solid #a7b6c8;border-radius:2px;"></div>
<div class="r" style="left:973px;top:38px;width:285px;height:24px;background:#fff;border:1px solid #a7b6c8;border-radius:2px;"></div>
<svg width="34" height="34" style="left:3px;top:33px" viewBox="0 0 34 34">
<defs><linearGradient id="bkg" x1="0" y1="0" x2="0" y2="1"><stop offset="0" stop-color="#ffffff"/><stop offset="1" stop-color="#e6edf5"/></linearGradient></defs>
<circle cx="17" cy="17" r="15.5" fill="url(#bkg)" stroke="#9aabbd" stroke-width="1"/>
<path d="M10.6,17 L17.6,10 L19.6,12 L16.6,15.1 L24,15.1 L24,18.9 L16.6,18.9 L19.6,22 L17.6,24 Z" fill="#5b6774" stroke="#4a5561" stroke-width="0.6" stroke-linejoin="round"/>
</svg>
<svg width="14" height="14" style="left:40px;top:43px" viewBox="0 0 14 14">
<circle cx="7" cy="7" r="6.8" fill="#a8a8a8"/>
<path d="M1.6,4.6 C2.2,3.0 4.0,2.2 5.6,2.5 C5.6,3.8 4.6,5.4 2.4,5.9 Z" fill="#f4f4f4"/>
<path d="M2.9,8.6 C4.4,7.9 6.6,8.2 7.9,9.3 C7.6,10.8 6.8,12.0 5.6,12.4 C4.2,11.6 3.2,10.2 2.9,8.6 Z" fill="#efefef"/>
<path d="M10.4,5.4 C11.6,5.2 12.6,6.0 12.8,7.0 C12.6,8.2 11.8,9.2 10.6,9.4 C10.0,8.2 9.9,6.6 10.4,5.4 Z" fill="#efefef"/>
<path d="M6,2.3 C7.4,2.4 8.4,2.9 8.8,3.6 C7.6,3.8 6.6,3.3 6,2.3 Z" fill="#d8d8d8"/>
</svg>
<div class="t" style="left:58.5px;top:44.5px;font-size:12.5px;line-height:12.5px;color:#000;letter-spacing:-0.35px;">192.168.1.3<span style="color:#7b7b7b">/pbxstat/stat.php</span></div>
<svg width="10" height="8" style="left:933px;top:47px" viewBox="0 0 10 8"><path d="M0.5,0.6 L9.2,0.6 L4.85,6.8 Z" fill="#e1e7ee" stroke="#aab6c3" stroke-width="1"/></svg>
<svg width="14" height="14" style="left:947px;top:44px" viewBox="0 0 14 14">
<path d="M9.81,3.26 A4.3,4.3 0 1 0 10.57,9.02" fill="none" stroke="#72859a" stroke-width="2.1" stroke-linecap="round"/>
<path d="M7.6,5.7 L12.75,0.3 L12.75,5.7 Z" fill="#72859a"/>
</svg>
<svg width="17" height="17" style="left:978px;top:42px" viewBox="0 0 17 17">
<defs><linearGradient id="yg" x1="0" y1="0" x2="0" y2="1"><stop offset="0" stop-color="#ffffff"/><stop offset="0.45" stop-color="#f6f6f6"/><stop offset="0.55" stop-color="#e2e2e2"/><stop offset="1" stop-color="#d6d6d6"/></linearGradient></defs>
<path d="M1.5,0.5 L11,0.5 L15.3,7.8 L11,15.1 L1.5,15.1 Q0.5,15.1 0.5,14.1 L0.5,1.5 Q0.5,0.5 1.5,0.5 Z" fill="url(#yg)" stroke="#b3b3b3" stroke-width="1"/>
<path d="M9.2,12.8 L9.2,2.7 L7.4,2.7 C5.6,2.7 4.4,3.8 4.4,5.6 C4.4,6.9 5.0,7.7 6.0,8.1 L4.0,12.8 L5.4,12.8 L7.2,8.4 L7.9,8.4 L7.9,12.8 Z M7.9,7.3 L7.4,7.3 C6.4,7.3 5.8,6.7 5.8,5.6 C5.8,4.4 6.5,3.8 7.4,3.8 L7.9,3.8 Z" fill="#e8120f"/>
</svg>
<svg width="6" height="4" style="left:998px;top:49px" viewBox="0 0 6 4"><path d="M0,0 L6,0 L3,3.2 Z" fill="#3f4750"/></svg>
<div class="t" style="left:1010px;top:45px;font-size:12px;line-height:12px;color:#7a7a7a;font-style:italic;letter-spacing:-0.1px;">Яндекс</div>
<svg width="14" height="14" style="left:1238px;top:41px" viewBox="0 0 14 14">
<circle cx="9" cy="5.6" r="3.9" fill="none" stroke="#2f6db5" stroke-width="2"/>
<path d="M6.3,8.3 L1.6,13" stroke="#2f6db5" stroke-width="2.4" stroke-linecap="round"/>
</svg>
<svg width="17" height="17" style="left:1270px;top:41px" viewBox="0 0 17 17">
<defs><linearGradient id="bmg" x1="0" y1="0" x2="1" y2="0"><stop offset="0" stop-color="#c3cad4"/><stop offset="0.22" stop-color="#aab3c0"/><stop offset="0.3" stop-color="#8591a3"/><stop offset="1" stop-color="#78849a"/></linearGradient></defs>
<rect x="0" y="0.5" width="16" height="16" rx="1.5" fill="url(#bmg)"/>
<path d="M9.40,3.60 L10.75,7.04 L14.44,7.26 L11.59,9.61 L12.52,13.19 L9.40,11.20 L6.28,13.19 L7.21,9.61 L4.36,7.26 L8.05,7.04 Z" fill="#fff" stroke="#fff" stroke-width="0.6" stroke-linejoin="round"/>
</svg>
<div class="r" style="left:1292px;top:41px;width:1px;height:17px;background:#b9c6d4;"></div>
<svg width="16" height="16" style="left:1299px;top:41px" viewBox="0 0 16 16">
<path d="M2,3.5 L5.5,3.5 L8,1 L10.5,3.5 L14,3.5 Q15,3.5 15,4.5 L15,14.5 Q15,15.5 14,15.5 L2,15.5 Q1,15.5 1,14.5 L1,4.5 Q1,3.5 2,3.5 Z" fill="#535f6c"/>
<rect x="3" y="6" width="2" height="1.6" fill="#e6edf5"/><rect x="6" y="6" width="7" height="1.6" fill="#e6edf5"/>
<rect x="3" y="9" width="2" height="1.6" fill="#e6edf5"/><rect x="6" y="9" width="7" height="1.6" fill="#e6edf5"/>
<rect x="3" y="12" width="2" height="1.6" fill="#e6edf5"/><rect x="6" y="12" width="7" height="1.6" fill="#e6edf5"/>
</svg>
<svg width="16" height="16" style="left:1334px;top:42px" viewBox="0 0 16 16"><path d="M5,0.5 L11,0.5 L11,7.5 L15,7.5 L8,15 L1,7.5 L5,7.5 Z" fill="#535f6c"/></svg>
<svg width="17" height="16" style="left:1370px;top:42px" viewBox="0 0 17 16"><path d="M8.5,0.5 L16.5,8 L14.8,8 L8.5,2.6 L2.2,8 L0.5,8 Z M3.5,8 L8.5,3.8 L13.5,8 L13.5,15 L10.2,15 L10.2,10.5 L6.8,10.5 L6.8,15 L3.5,15 Z" fill="#535f6c"/></svg>
<div class="r" style="left:1397px;top:31px;width:1px;height:37px;background:#b3c1d1;"></div>
<svg width="17" height="14" style="left:1410px;top:43px" viewBox="0 0 17 14"><path d="M1.5,1.5 L15.5,1.5 M1.5,6.8 L15.5,6.8 M1.5,12 L15.5,12" stroke="#535f6c" stroke-width="2.6" stroke-linecap="round"/></svg>
</body></html>
